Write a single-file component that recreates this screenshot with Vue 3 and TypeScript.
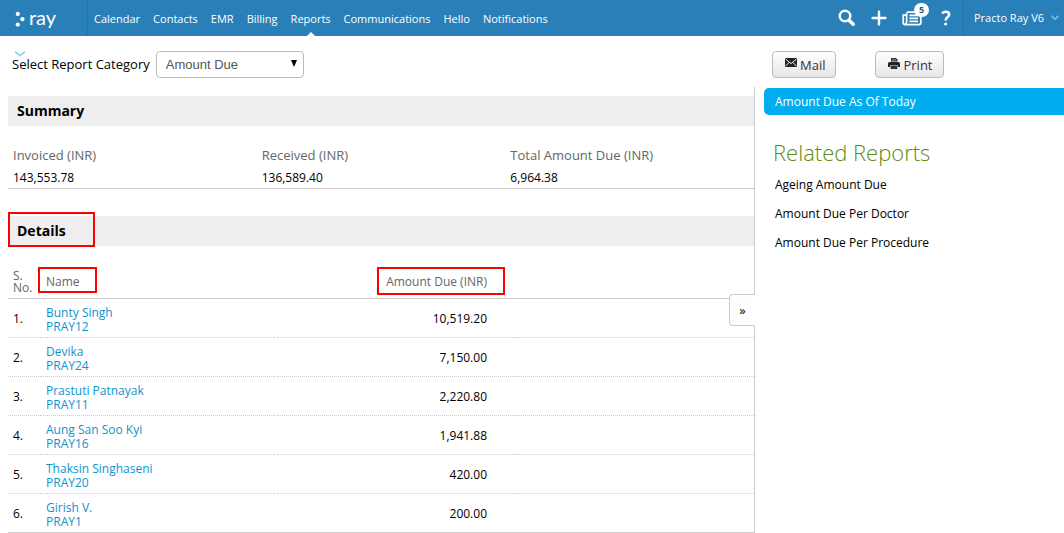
<script setup lang="ts">
import { ref } from 'vue'

interface Patient {
  name: string
  code: string
  due: string
}

const navItems: string[] = [
  'Calendar',
  'Contacts',
  'EMR',
  'Billing',
  'Reports',
  'Communications',
  'Hello',
  'Notifications',
]
const activeNav = ref('Reports')

const category = ref('Amount Due')
const categories: string[] = ['Amount Due', 'Payments', 'Income', 'Appointments', 'Patients']

const summary = [
  { label: 'Invoiced (INR)', value: '143,553.78' },
  { label: 'Received (INR)', value: '136,589.40' },
  { label: 'Total Amount Due (INR)', value: '6,964.38' },
]

const patients: Patient[] = [
  { name: 'Bunty Singh', code: 'PRAY12', due: '10,519.20' },
  { name: 'Devika', code: 'PRAY24', due: '7,150.00' },
  { name: 'Prastuti Patnayak', code: 'PRAY11', due: '2,220.80' },
  { name: 'Aung San Soo Kyi', code: 'PRAY16', due: '1,941.88' },
  { name: 'Thaksin Singhaseni', code: 'PRAY20', due: '420.00' },
  { name: 'Girish V.', code: 'PRAY1', due: '200.00' },
]

const related: string[] = ['Ageing Amount Due', 'Amount Due Per Doctor', 'Amount Due Per Procedure']
</script>

<template>
  <div class="page">
    <header class="topbar">
      <a class="logo" href="#" aria-label="ray">
        <svg class="dots" width="10" height="17" viewBox="0 0 10 17" aria-hidden="true">
          <circle cx="2.8" cy="2.9" r="2.1" />
          <circle cx="7.4" cy="8.2" r="2.1" />
          <circle cx="2.8" cy="13.6" r="2.1" />
        </svg>
        <span>ray</span>
      </a>
      <nav class="nav">
        <a
          v-for="item in navItems"
          :key="item"
          href="#"
          :class="{ active: item === activeNav }"
          @click.prevent="activeNav = item"
          >{{ item }}</a
        >
      </nav>
      <div class="tools">
        <button type="button" class="tool" aria-label="Search">
          <svg width="18" height="18" viewBox="0 0 18 18" fill="none" stroke="#fff">
            <circle cx="7" cy="7" r="5.3" stroke-width="2.4" />
            <path d="M11 11.2L15.2 15.2" stroke-width="3.6" stroke-linecap="round" />
          </svg>
        </button>
        <button type="button" class="tool" aria-label="Add">
          <svg width="16" height="16" viewBox="0 0 16 16" fill="none" stroke="#fff" stroke-width="2.4">
            <path d="M8 1.6V14.4M1.6 8H14.4" stroke-linecap="round" />
          </svg>
        </button>
        <button type="button" class="tool news" aria-label="News">
          <svg width="20" height="16" viewBox="0 0 20 16" fill="none" stroke="#fff" stroke-width="1.7">
            <path d="M5 2.2H17.2Q18.8 2.2 18.8 4V12.8Q18.8 14.6 17 14.6H3.4Q1.2 14.6 1.2 12.4V5.2H4.6V12Q4.6 14 3.2 14.4M4.6 5V2.6" />
            <path d="M7.4 5.4H16M7.4 8.4H16M7.4 11.4H16" />
          </svg>
          <span class="badge">5</span>
        </button>
        <button type="button" class="tool help" aria-label="Help">
          <svg width="10" height="16" viewBox="0 0 10 16" fill="none" stroke="#fff" stroke-width="2.5">
            <path d="M1 3.2Q2.8 1.8 4.8 1.8Q8.2 1.8 8.2 4.6Q8.2 6 6.4 7.3Q4.6 8.6 4.6 10.6" />
            <circle cx="4.6" cy="13.9" r="1.5" fill="#fff" stroke="none" />
          </svg>
        </button>
      </div>
      <button type="button" class="account">
        <span>Practo Ray V6</span>
        <svg width="8" height="6" viewBox="0 0 8 6" fill="none" stroke="#7fd0f5" stroke-width="1.3">
          <path d="M0.6 0.8L4 4.4L7.4 0.8" />
        </svg>
      </button>
    </header>

    <div class="body">
      <main class="report">
        <div class="filter">
          <svg class="collapse" width="12" height="6" viewBox="0 0 12 6" fill="none" stroke="#84cdef" stroke-width="1.5">
            <path d="M1 0.8L6 4.6L11 0.8" />
          </svg>
          <label for="category">Select Report Category</label>
          <div class="select">
            <select id="category" v-model="category">
              <option v-for="c in categories" :key="c">{{ c }}</option>
            </select>
            <svg width="6" height="7" viewBox="0 0 6 7" aria-hidden="true"><path d="M0 0H6L3 7Z" /></svg>
          </div>
        </div>

        <div class="sheet">
          <h2>Summary</h2>
          <dl class="totals">
            <div v-for="s in summary" :key="s.label">
              <dt>{{ s.label }}</dt>
              <dd>{{ s.value }}</dd>
            </div>
          </dl>

          <h2 class="details">Details<span class="mark mark-details"></span></h2>
          <table>
            <thead>
              <tr>
                <th class="no" scope="col">S. No.</th>
                <th class="name" scope="col">Name<span class="mark mark-name"></span></th>
                <th class="due" scope="col">Amount Due (INR)<span class="mark mark-due"></span></th>
                <td></td>
              </tr>
            </thead>
            <tbody>
              <tr v-for="(p, i) in patients" :key="p.code">
                <td>{{ i + 1 }}.</td>
                <td class="patient">
                  <a href="#">{{ p.name }}<br />{{ p.code }}</a>
                </td>
                <td class="due">{{ p.due }}</td>
                <td></td>
              </tr>
            </tbody>
          </table>
          <button type="button" class="toggle" aria-label="Collapse panel">»</button>
        </div>
      </main>

      <aside class="side">
        <div class="actions">
          <button type="button">
            <svg width="12" height="9" viewBox="0 0 12 9" aria-hidden="true">
              <rect width="12" height="9" fill="#222" />
              <path d="M0.3 0.8L6 5.6L11.7 0.8M0.3 8.3L4.1 4.4M11.7 8.3L7.9 4.4" fill="none" stroke="#f4f4f4" stroke-width="1" />
            </svg>
            Mail
          </button>
          <button type="button">
            <svg width="12" height="11" viewBox="0 0 12 11" aria-hidden="true">
              <path d="M3 0H8L9.4 1.4V3.4H3Z" fill="#333" />
              <path d="M4 1.6H8M4 3H8" stroke="#aaa" stroke-width=".6" />
              <path d="M1.6 4H10.4Q12 4 12 5.6V9H10V7.4H2V9H0V5.6Q0 4 1.6 4Z" fill="#222" />
              <path d="M2.6 8H9.4V11H2.6Z" fill="#333" />
            </svg>
            Print
          </button>
        </div>
        <a class="current" href="#">Amount Due As Of Today</a>
        <h3>Related Reports</h3>
        <ul>
          <li v-for="r in related" :key="r"><a href="#">{{ r }}</a></li>
        </ul>
      </aside>
    </div>
  </div>
</template>

<style>
body {
  margin: 0;
  background: #fff;
}
</style>

<style scoped>
.page {
  font-family: 'Open Sans', 'Noto Sans', sans-serif;
  font-size: 12px;
  line-height: 14px;
  color: #000;
}
a {
  text-decoration: none;
  color: inherit;
}
button {
  font: inherit;
  color: inherit;
  border: 0;
  background: none;
  padding: 0;
  margin: 0;
  cursor: pointer;
}
svg {
  display: block;
}

.topbar {
  display: flex;
  height: 36px;
  background: #2980b9;
  color: #fff;
  font-size: 11px;
}
.logo {
  display: flex;
  align-items: center;
  gap: 4px;
  width: 72px;
  padding-left: 15px;
  border-right: 1px solid #2471a3;
  font-family: Lato, sans-serif;
  font-size: 20px;
  line-height: 34px;
}
.logo span {
  padding-bottom: 2px;
}
.dots {
  margin-top: 3px;
  fill: #fff;
}
.nav {
  display: flex;
  gap: 13px;
  padding-left: 6px;
  line-height: 38px;
}
.nav a {
  position: relative;
}
.nav .active::after {
  content: '';
  position: absolute;
  left: 50%;
  bottom: 0;
  margin-left: -4px;
  border: 4px solid transparent;
  border-top: 0;
  border-bottom-color: #fff;
}
.tools {
  display: flex;
  align-items: center;
  gap: 15px;
  margin-left: auto;
  padding-right: 12px;
}
.help {
  margin-left: 4px;
}
.news {
  position: relative;
}
.badge {
  position: absolute;
  top: -7px;
  left: 12px;
  width: 15px;
  height: 14px;
  border-radius: 7px;
  background: #fff;
  color: #1b6596;
  font-size: 9px;
  font-weight: 700;
  line-height: 14px;
  text-align: center;
}
.account {
  display: flex;
  align-items: center;
  gap: 7px;
  padding: 0 5px 0 10px;
  border-left: 1px solid #2471a3;
}

.body {
  display: grid;
  grid-template-columns: minmax(0, 1fr) 309px;
}
.filter {
  position: relative;
  display: flex;
  align-items: center;
  gap: 6px;
  height: 27px;
  padding: 15px 12px 9px;
  font-size: 13px;
}
.filter label {
  padding-bottom: 2px;
}
.collapse {
  position: absolute;
  left: 14px;
  top: 15px;
}
.select {
  position: relative;
}
.select select {
  appearance: none;
  width: 148px;
  height: 27px;
  padding: 0 24px 0 9px;
  border: 1px solid #bbb;
  border-radius: 4px;
  background: #fff;
  color: #555;
  font: 13px 'Liberation Sans', sans-serif;
}
.select svg {
  position: absolute;
  right: 7px;
  top: 9px;
  pointer-events: none;
}
.sheet {
  position: relative;
  padding: 9px 0 0 8px;
  border-right: 1px solid #ccc;
}
h2 {
  position: relative;
  margin: 0;
  padding-left: 9px;
  background: #eee;
  font-size: 14px;
  font-weight: 700;
  line-height: 30px;
}
.totals {
  display: grid;
  grid-template-columns: repeat(3, 1fr);
  margin: 0 0 27px;
  padding: 18px 0 0;
  border-bottom: 1px solid #ccc;
}
.totals div {
  padding-left: 5px;
}
dt {
  color: #666;
  font-size: 13px;
  line-height: 22px;
}
dd {
  margin: 0;
  padding-top: 2px;
  line-height: 20px;
}
table {
  width: 100%;
  table-layout: fixed;
  border-collapse: separate;
  border-spacing: 0;
}
th,
td {
  padding: 6px 5px 4px;
  border-bottom: 1px dotted #ccc;
  text-align: left;
  font-weight: 400;
}
td.patient {
  padding: 7px 5px 3px;
}
thead th,
thead td {
  position: relative;
  height: 12px;
  padding: 24px 5px 4px;
  border-bottom: 1px solid #ccc;
  color: #666;
  line-height: 12px;
}
th.no {
  width: 23px;
}
th.name {
  width: 227px;
}
th.due {
  width: 204px;
}
.due {
  padding-right: 28px;
  text-align: right;
}
thead th.due {
  padding-right: 28px;
}
tbody tr:last-child td {
  border-bottom: 1px solid #ccc;
}
td a {
  color: #0f93d0;
}
.mark {
  position: absolute;
  box-sizing: border-box;
  border: 2px solid #f00;
}
.mark-details {
  left: 0;
  top: -4px;
  width: 87px;
  height: 35px;
}
.mark-name {
  left: -3px;
  bottom: 5px;
  width: 59px;
  height: 26px;
}
.mark-due {
  right: 10px;
  bottom: 3px;
  width: 128px;
  height: 28px;
}
.toggle {
  position: absolute;
  right: -1px;
  top: 207px;
  width: 26px;
  height: 32px;
  border: 1px solid #ccc;
  border-right: 0;
  border-radius: 4px 0 0 4px;
  background: #fffdfd;
  font-size: 13px;
}

.side {
  padding-left: 9px;
}
.actions {
  display: flex;
  gap: 39px;
  padding: 15px 8px 10px;
}
.actions button {
  display: flex;
  gap: 3px;
  height: 27px;
  padding: 6px 10px 0 12px;
  border: 1px solid #bbb;
  border-radius: 4px;
  background: linear-gradient(#fff, #e6e6e6);
  color: #333;
  font-size: 13px;
}
.current {
  display: block;
  padding-left: 11px;
  border-radius: 5px 0 0 5px;
  background: #00aef0;
  color: #fff;
  line-height: 27px;
}
h3 {
  margin: 0;
  padding: 23px 0 4px 9px;
  color: #598c14;
  font-size: 22px;
  font-weight: 300;
  line-height: 28px;
}
ul {
  margin: 0;
  padding: 0 0 0 11px;
  list-style: none;
  line-height: 29px;
}
</style>
